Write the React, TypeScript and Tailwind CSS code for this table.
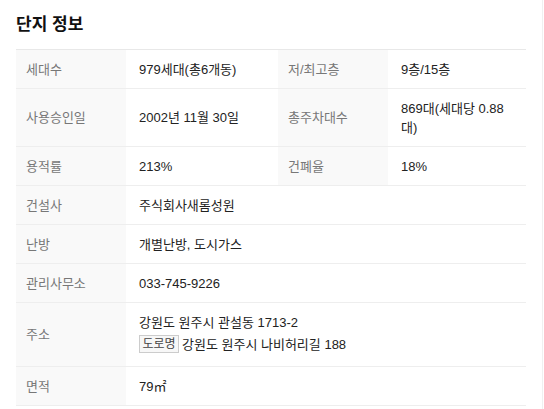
import React from "react";

const font = { fontFamily: '"Liberation Sans", "Noto Sans CJK KR", sans-serif' };

function Label({ children }: { children: React.ReactNode }) {
  return (
    <div className="w-[110px] shrink-0 bg-[#f9f9f9] px-[10px] py-[9.5px] text-[#777] flex items-center">
      {children}
    </div>
  );
}

function Value({ children, className = "" }: { children: React.ReactNode; className?: string }) {
  return (
    <div className={"px-[13px] py-[9.5px] text-[#222] flex flex-col justify-center " + className}>
      {children}
    </div>
  );
}

export default function App() {
  return (
    <div className="w-[543px] h-[409px] bg-white border-r border-[#f0f0f0]" style={font}>
      <div className="px-4 pt-[14px]">
        <h2 className="text-[17px] font-bold text-[#111] leading-[22px]">단지 정보</h2>
        <div className="mt-[13px] border-t border-[#e8e8e8] text-[13px] leading-[19px]">
          <div className="flex border-b border-[#eee]">
            <Label>세대수</Label>
            <Value className="w-[152px]">979세대(총6개동)</Value>
            <Label>저/최고층</Label>
            <Value className="flex-1">9층/15층</Value>
          </div>
          <div className="flex border-b border-[#eee]">
            <Label>사용승인일</Label>
            <Value className="w-[152px]">2002년 11월 30일</Value>
            <Label>총주차대수</Label>
            <Value className="flex-1">869대(세대당 0.88 대)</Value>
          </div>
          <div className="flex border-b border-[#eee]">
            <Label>용적률</Label>
            <Value className="w-[152px]">213%</Value>
            <Label>건폐율</Label>
            <Value className="flex-1">18%</Value>
          </div>
          <div className="flex border-b border-[#eee]">
            <Label>건설사</Label>
            <Value className="flex-1">주식회사새롬성원</Value>
          </div>
          <div className="flex border-b border-[#eee]">
            <Label>난방</Label>
            <Value className="flex-1">개별난방, 도시가스</Value>
          </div>
          <div className="flex border-b border-[#eee]">
            <Label>관리사무소</Label>
            <Value className="flex-1">033-745-9226</Value>
          </div>
          <div className="flex border-b border-[#eee]">
            <Label>주소</Label>
            <Value className="flex-1">
              <div>강원도 원주시 관설동 1713-2</div>
              <div className="flex items-center h-[25px]">
                <span className="inline-flex items-center h-[18px] w-[40px] justify-center border border-[#ccc] bg-[#f7f7f7] text-[12px] text-[#444] mr-[3px]">
                  도로명
                </span>
                <span>강원도 원주시 나비허리길 188</span>
              </div>
            </Value>
          </div>
          <div className="flex border-b border-[#eee]">
            <Label>면적</Label>
            <Value className="flex-1">79㎡</Value>
          </div>
        </div>
      </div>
    </div>
  );
}
